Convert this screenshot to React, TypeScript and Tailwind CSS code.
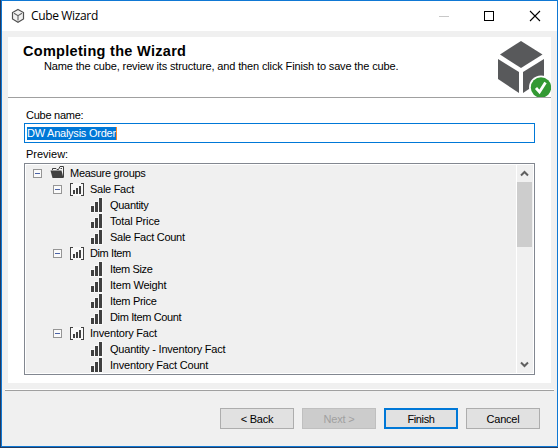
import React from "react";

type Kind = "folder" | "group" | "measure";
type Item = { kind: Kind; label: string; spacing: string };

const items: Item[] = [
  { kind: "folder", label: "Measure groups", spacing: "tracking-[-0.28px]" },
  { kind: "group", label: "Sale Fact", spacing: "tracking-[-0.28px]" },
  { kind: "measure", label: "Quantity", spacing: "tracking-[-0.3px]" },
  { kind: "measure", label: "Total Price", spacing: "tracking-[-0.15px]" },
  { kind: "measure", label: "Sale Fact Count", spacing: "tracking-[-0.28px]" },
  { kind: "group", label: "Dim Item", spacing: "tracking-[-0.4px]" },
  { kind: "measure", label: "Item Size", spacing: "tracking-[-0.38px]" },
  { kind: "measure", label: "Item Weight", spacing: "tracking-[-0.2px]" },
  { kind: "measure", label: "Item Price", spacing: "tracking-[-0.3px]" },
  { kind: "measure", label: "Dim Item Count", spacing: "tracking-[-0.37px]" },
  { kind: "group", label: "Inventory Fact", spacing: "tracking-[-0.2px]" },
  { kind: "measure", label: "Quantity - Inventory Fact", spacing: "tracking-[-0.2px]" },
  { kind: "measure", label: "Inventory Fact Count", spacing: "tracking-[-0.2px]" },
];

const indent: Record<Kind, string> = {
  folder: "pl-[7px]",
  group: "pl-[27px]",
  measure: "pl-[63px]",
};

function Expander() {
  return (
    <svg width="9" height="9" viewBox="0 0 9 9" shapeRendering="crispEdges" className="mt-px shrink-0">
      <rect x="0.5" y="0.5" width="8" height="8" fill="#fafafa" stroke="#959595" />
      <path d="M2 4.5H7" stroke="#4b63a7" />
    </svg>
  );
}

function ItemIcon({ kind }: { kind: Kind }) {
  if (kind === "folder") {
    return (
      <svg width="16" height="16" viewBox="0 0 16 16" className="shrink-0">
        <path d="M2.500 5V3.500H6L7 4.500H8.500L10 1.500H13.500V12.500" fill="#f6f6f6" stroke="#404040" />
        <path d="M10.500 3.500H12" fill="none" stroke="#404040" />
        <path d="M0.500 5.500H11.500L13.500 13H2.500Z" fill="#404040" />
      </svg>
    );
  }
  if (kind === "group") {
    return (
      <svg width="16" height="16" viewBox="0 0 16 16" shapeRendering="crispEdges" className="shrink-0">
        <path d="M0 2H14V15H0Z" fill="#f8f8f8" />
        <path d="M3 2.5H0.5V14.5H3M11 2.5H13.5V14.5H11" fill="none" stroke="#404040" />
        <path d="M3 9H5V13H3ZM6 7H8V13H6ZM9 5H11V13H9Z" fill="#404040" />
      </svg>
    );
  }
  return (
    <svg width="16" height="16" viewBox="0 0 16 16" shapeRendering="crispEdges" className="shrink-0">
      <path d="M1 8H5V4H9V0H14V16H1Z" fill="#f8f8f8" />
      <path d="M2 9H5V15H2ZM6 5H9V15H6ZM10 1H13V15H10Z" fill="#404040" />
    </svg>
  );
}

function TitleBar() {
  return (
    <div className="flex h-[30px] shrink-0 items-center bg-white pl-[9px]">
      <svg width="14" height="16" viewBox="0 0 14 16" className="shrink-0">
        <path d="M7 1.5L12.5 4.5V11L7 14.3L1.5 11V4.5Z" fill="#f2f2f2" stroke="#505050" strokeWidth="1.2" />
        <path d="M3 5.3L7 7.7L11 5.3M7 7.7V12.5" fill="none" stroke="#606060" strokeWidth="1.1" />
      </svg>
      <span className="ml-[6px] font-['Open_Sans','Noto_Sans',sans-serif] text-[12px] leading-4 tracking-[-0.35px]">Cube Wizard</span>
      <svg width="104" height="12" viewBox="0 0 104 12" shapeRendering="crispEdges" className="mr-[15px] ml-auto">
        <path d="M1 6.5H11" stroke="#c8c8c8" />
        <rect x="46.5" y="1.5" width="9" height="9" fill="none" stroke="#000" />
        <path d="M92 1L102 11M102 1L92 11" stroke="#000" strokeWidth="1.1" shapeRendering="auto" />
      </svg>
    </div>
  );
}

function CubeLogo() {
  return (
    <svg width="53" height="57" viewBox="0 0 53 57" className="shrink-0">
      <path d="M23 1L44.500 14.500L23 28L2 14.500Z" fill="#58595b" />
      <path d="M0 19L21 32V53L0 39Z" fill="#58595b" />
      <path d="M25 32L46 19V39L25 53Z" fill="#58595b" />
      <circle cx="43" cy="47.500" r="12" fill="#fff" />
      <circle cx="43" cy="47.500" r="10.200" fill="#339933" />
      <path d="M38 48L41.500 52L47.500 42.500" fill="none" stroke="#fff" strokeWidth="2.800" />
    </svg>
  );
}

function Button({ children, look }: { children: React.ReactNode; look: string }) {
  return (
    <button className={`flex h-[21px] w-[74px] items-center justify-center pt-px leading-none ${look}`}>{children}</button>
  );
}

export default function App() {
  return (
    <div className="flex h-[448px] w-[558px] overflow-hidden bg-[#243a5e] pb-px pl-px font-['Liberation_Sans',Arial,sans-serif] text-[11px] text-black">
      <div className="flex w-full flex-col border border-[#0f78d4] bg-[#f0f0f0]">
        <TitleBar />
        <main className="mx-[6px] mt-[6px] flex h-[346px] w-[543px] shrink-0 flex-col bg-white">
          <header className="flex h-[61px] shrink-0 justify-between border-b border-[#a0a0a0]">
            <div className="pt-[6px] pl-[15px]">
              <h1 className="h-[16px] text-[14.500px] leading-4 font-bold tracking-[0.3px] whitespace-nowrap">Completing the Wizard</h1>
              <p className="pl-[21px] leading-[14px] tracking-[-0.14px] whitespace-nowrap">Name the cube, review its structure, and then click Finish to save the cube.</p>
            </div>
            <div className="pt-[3px]"><CubeLogo /></div>
          </header>
          <div className="flex flex-col pr-4 pl-4">
            <label className="mt-[9px] h-4 pl-[2px] leading-4 tracking-[-0.25px]">Cube name:</label>
            <div className="flex h-5 items-center border border-[#0078d7] pl-[2px]">
              <span className="h-[13px] border-r border-[#ff8728] bg-[#0078d7] leading-[13px] tracking-[-0.24px] text-white">DW Analysis Order</span>
            </div>
            <div className="mt-[3px] h-[17px] pl-[2px] leading-4">Preview:</div>
            <section className="flex h-[212px] border border-[#828790] p-px">
              <div className="flex min-w-0 flex-1 flex-col overflow-hidden bg-[#f0f0f0]">
                {items.map((item) => (
                  <div key={item.label} className={`flex h-4 shrink-0 items-center ${indent[item.kind]}`}>
                    {item.kind !== "measure" && <Expander />}
                    <span className={item.kind === "measure" ? "mr-px" : "ml-2"}><ItemIcon kind={item.kind} /></span>
                    <span className={`ml-[4px] leading-4 whitespace-nowrap ${item.spacing}`}>{item.label}</span>
                  </div>
                ))}
              </div>
              <div className="flex w-[17px] flex-col items-center border-l border-white bg-[#f0f0f0] pr-px">
                <svg width="15" height="17" viewBox="0 0 15 17" className="shrink-0">
                  <path d="M4 10.500L7.500 7L11 10.500" fill="none" stroke="#606060" strokeWidth="2" />
                </svg>
                <div className="h-[65px] w-full bg-[#cdcdcd]" />
                <svg width="15" height="17" viewBox="0 0 15 17" className="mt-auto shrink-0">
                  <path d="M4 6.500L7.500 10L11 6.500" fill="none" stroke="#606060" strokeWidth="2" />
                </svg>
              </div>
            </section>
          </div>
        </main>
        <footer className="mx-[3px] mt-[6px] border-t border-white">
          <div className="flex justify-end gap-2 border-t border-[#a0a0a0] pt-[17px] pr-[14px]">
            <Button look="border border-[#adadad] bg-[#e1e1e1] tracking-[-0.2px]">&lt; Back</Button>
            <Button look="border border-[#bfbfbf] bg-[#cccccc] text-[#a0a0a0] tracking-[-0.2px]">Next &gt;</Button>
            <Button look="border-2 border-[#0078d7] bg-[#e1e1e1] tracking-[-0.35px]">Finish</Button>
            <Button look="border border-[#adadad] bg-[#e1e1e1] tracking-[-0.2px]">Cancel</Button>
          </div>
        </footer>
      </div>
    </div>
  );
}
